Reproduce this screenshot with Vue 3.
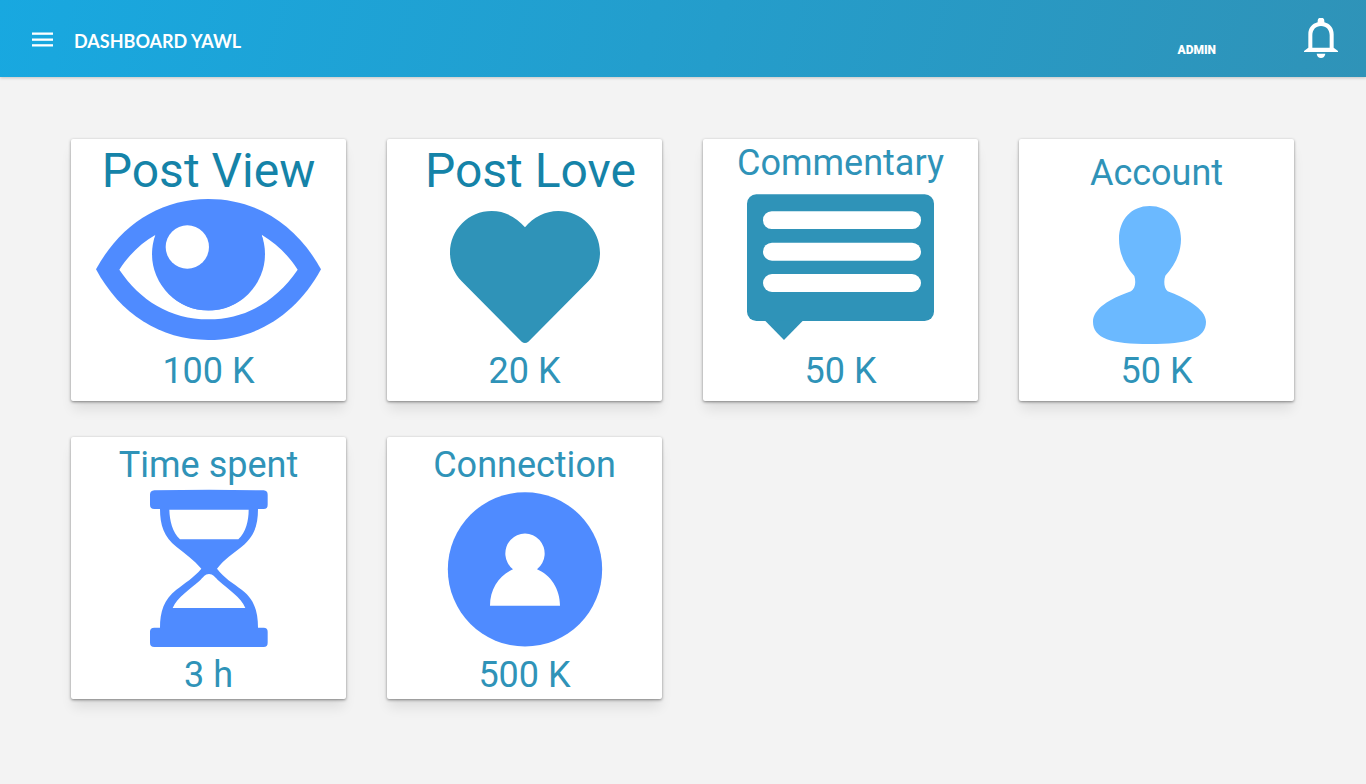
<script setup>
const cards = [
  { id: 'view', title: 'Post View', value: '100 K', kind: 'post' },
  { id: 'love', title: 'Post Love', value: '20 K', kind: 'post indented' },
  { id: 'comment', title: 'Commentary', value: '50 K', kind: 'raised' },
  { id: 'account', title: 'Account', value: '50 K', kind: 'lowered' },
  { id: 'time', title: 'Time spent', value: '3 h', kind: 'tall' },
  { id: 'connection', title: 'Connection', value: '500 K', kind: 'tall' }
]
</script>

<template>
  <div class="page">
    <header class="topbar">
      <button class="icon-button" type="button" aria-label="Menu">
        <svg width="21" height="17" viewBox="0 0 21 17" fill="#fff" aria-hidden="true">
          <rect y="2.500" width="21" height="2.300" />
          <rect y="8.500" width="21" height="2.300" />
          <rect y="14.200" width="21" height="2.300" />
        </svg>
      </button>
      <h1 class="brand">DASHBOARD YAWL</h1>
      <span class="user">ADMIN</span>
      <button class="icon-button" type="button" aria-label="Notifications">
        <svg width="34" height="42" viewBox="492 54 102 126" aria-hidden="true">
          <path fill="#fff" fill-rule="evenodd" d="M533 67V62a10 9 0 0 1 20 0v5c17 4 28 17 28 36v40l13 10v3H492v-3l13-10v-40c0-19 11-32 28-36zM543 78c-16 0-26 11-26 28v37h52v-37c0-17-10-28-26-28z" />
          <path fill="#fff" d="M530 161h26c-1 8-6 13-13 13s-12-5-13-13z" />
        </svg>
      </button>
    </header>

    <main class="grid">
      <article v-for="card in cards" :key="card.id" class="card" :class="card.kind">
        <h2 class="title">{{ card.title }}</h2>

        <svg v-if="card.id === 'view'" class="art" viewBox="33 222 825 450" aria-hidden="true">
          <path fill="#4f8bff" d="M108 433C180 300 300 222 445 222S710 300 783 433C710 567 590 645 445 645S180 567 108 433z" />
          <path fill="#fff" d="M178 434C206 391 242 354 287 329C258 440 325 556 445 556S633 440 605 329C650 356 686 392 713 434C650 526 560 583 445 583S240 526 178 434z" />
          <path fill="#4f8bff" d="M287 328C280 346 276 366 276 387a169.500 169.500 0 0 0 339 0c0-21-4-41-11-59z" />
          <circle cx="382" cy="366" r="65" fill="#fff" />
        </svg>

        <svg v-else-if="card.id === 'love'" class="art" viewBox="33 222 825 450" aria-hidden="true">
          <path fill="#2f93b8" d="M447 307C422 277 387 258 347 258C278 258 222 314 222 383C222 417 235 446 257 469L437 650Q447 658 457 650L637 469C659 446 672 417 672 383C672 314 616 258 547 258C507 258 472 277 447 307z" />
        </svg>

        <svg v-else-if="card.id === 'comment'" class="art" viewBox="33 222 825 450" aria-hidden="true">
          <rect x="165" y="208" width="561" height="380" rx="28" fill="#2f93b8" />
          <path fill="#2f93b8" d="M218 586H334L276 645z" />
          <g fill="#fff">
            <rect x="213" y="259" width="474" height="53" rx="26" />
            <rect x="213" y="353" width="474" height="54" rx="27" />
            <rect x="213" y="447" width="474" height="54" rx="27" />
          </g>
        </svg>

        <svg v-else-if="card.id === 'account'" class="art" viewBox="33 222 825 450" aria-hidden="true">
          <path fill="#6bb9ff" d="M425 243C480 243 519 284 519 342C519 384 500 422 472 452C467 466 467 488 479 499C530 517 594 552 594 590C594 640 540 657 425 657S255 640 255 590C255 552 305 521 369 499C383 488 384 470 379 453C350 422 333 384 333 342C333 284 370 243 425 243z" />
        </svg>

        <svg v-else-if="card.id === 'time'" class="art" viewBox="33 186 825 498" aria-hidden="true">
          <path fill="#4f8bff" fill-rule="evenodd" d="M283 196Q447 193 611 196Q623 197 623 209V239Q623 252 611 252H594C594 300 583 336 545 365C520 385 492 403 471 431C492 459 520 475 545 494C583 522 594 560 594 608H611Q623 608 623 620V653Q623 666 611 666H283Q270 666 270 653V620Q270 608 283 608H300C300 560 312 522 349 494C374 475 402 457 424 431C402 405 374 385 349 365C312 336 300 300 300 252H283Q270 252 270 239V209Q270 197 283 196zM328 254C329 288 337 320 360 343H535C558 320 566 288 566 254zM338 549H556C543 516 503 492 477 468C465 457 459 447 447 447S430 457 418 468C391 492 352 516 338 549z" />
        </svg>

        <svg v-else class="art" viewBox="33 186 825 498" aria-hidden="true">
          <circle cx="447" cy="433" r="231.500" fill="#4f8bff" />
          <path fill="#fff" d="M411 433a59 60 0 1 1 72 0C524 450 552 492 552 542H342C342 492 370 450 411 433z" />
        </svg>

        <p class="value">{{ card.value }}</p>
      </article>
    </main>
  </div>
</template>

<style>
body {
  background: #f3f3f3;
}
</style>

<style scoped>
.page {
  min-height: 100vh;
  background: #f3f3f3;
  font-family: Roboto, "Liberation Sans", sans-serif;
}

.topbar {
  box-sizing: border-box;
  display: flex;
  align-items: center;
  height: 77px;
  padding: 0 28px 0 32px;
  background: linear-gradient(105deg, #18a8e0, #2f93b8);
  box-shadow: 0 1px 3px rgba(0, 0, 0, 0.2);
  color: #fff;
}

.icon-button {
  display: flex;
  padding: 0;
  border: 0;
  background: none;
  cursor: pointer;
}

.brand {
  margin: 4px auto 0 21px;
  font-family: Lato, sans-serif;
  font-size: 18px;
  line-height: 24px;
  font-weight: 700;
}

.user {
  margin: 22px 88px 0 0;
  font-size: 12px;
  line-height: 16px;
  font-weight: 900;
}

.grid {
  display: grid;
  grid-template-columns: repeat(4, 1fr);
  gap: 36px 41px;
  padding: 62px 72px 62px 71px;
}

.card {
  display: flex;
  flex-direction: column;
  padding: 4px 0 8px;
  border-radius: 2px;
  background: #fff;
  box-shadow: 0 1px 3px rgba(0, 0, 0, 0.45), 0 10px 12px -2px rgba(0, 0, 0, 0.09);
  color: #2f93b8;
  text-align: center;
}

.title,
.value {
  margin: 0;
  font-size: 36px;
  line-height: 44px;
  font-weight: 400;
}

.art {
  display: block;
  width: 100%;
  height: 150px;
  margin-top: auto;
  overflow: visible;
}

.post .title {
  color: #1583a8;
  font-size: 48px;
  line-height: 56px;
}

.indented .title {
  padding-left: 12px;
}

.raised {
  padding-top: 2px;
}

.lowered {
  padding-top: 12px;
}

.tall {
  padding: 6px 0 2px;
}

.tall .art {
  height: 166px;
}
</style>
